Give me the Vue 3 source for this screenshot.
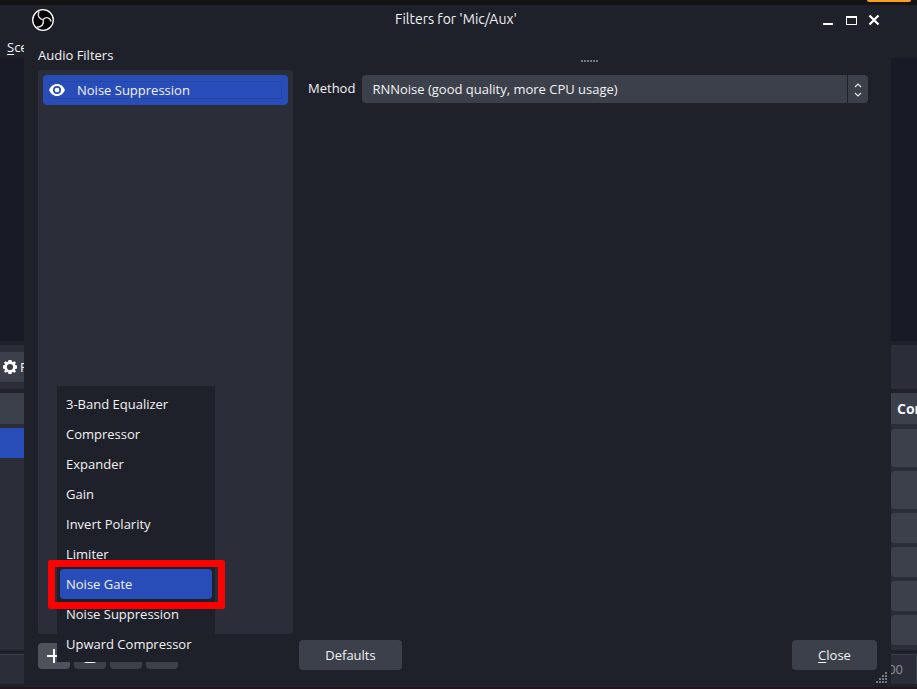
<script setup>
import { ref } from 'vue'

const filterTypes = [
  '3-Band Equalizer',
  'Compressor',
  'Expander',
  'Gain',
  'Invert Polarity',
  'Limiter',
  'Noise Gate',
  'Noise Suppression',
  'Upward Compressor'
]
const highlighted = ref('Noise Gate')
const method = ref('rnnoise')
const controls = ['tall', 'tall', 'short', 'short', 'short', 'short']
const gripDots = [
  [9, 0], [6, 3], [9, 3], [3, 6], [6, 6], [9, 6], [0, 9], [3, 9], [6, 9], [9, 9]
]
</script>

<template>
  <div class="screen">
    <div class="system-bar"><span class="indicator"></span></div>

    <div class="desktop">
      <aside class="strip left">
        <div class="menubar"><a href="#"><u>S</u>cene</a></div>
        <div class="preview"></div>
        <div class="context">
          <button class="props" type="button">
            <svg class="gear" viewBox="0 0 14 14" aria-hidden="true">
              <path fill="#fff" fill-rule="evenodd" d="M5.500 0h3l.5 1.700.9.400L11.500 1.200 12.900 2.600 12 4.200l.4.900 1.600.4v3l-1.600.4-.4.900.9 1.600-1.400 1.400-1.600-.9-.9.400-.5 1.700h-3l-.5-1.700-.9-.4-1.600.9L1.100 11.400 2 9.800l-.4-.9L0 8.500v-3l1.600-.4.400-.9-.9-1.600L2.500 1.200l1.600.9.900-.4zM7 3.900a3.100 3.100 0 1 0 0 6.200 3.100 3.100 0 0 0 0-6.200z" />
            </svg>
            <span>Properties</span>
          </button>
        </div>
        <div class="dock">
          <div class="dock-title"></div>
          <div class="scene-row"></div>
        </div>
        <div class="status"></div>
      </aside>

      <main class="dialog">
        <header class="titlebar">
          <svg class="logo" viewBox="0 0 22 22" aria-hidden="true">
            <circle cx="11" cy="11" r="10.300" fill="#050505" stroke="#fff" stroke-width="1.300" />
            <g fill="none" stroke="#dedede" stroke-width="1.400" stroke-linecap="round">
              <path d="M11.200 10.600C7.300 10.200 5.200 6.800 6.900 3" />
              <path d="M11.200 10.600C13.200 7.600 17.600 7.900 18.900 12" />
              <path d="M11.200 10.600C12.200 14.800 9.800 18.300 5.400 18" />
            </g>
          </svg>
          <h1>Filters for 'Mic/Aux'</h1>
          <div class="window-buttons">
            <button type="button" aria-label="Minimize">
              <svg viewBox="0 0 12 12"><path d="M1 9h10v2H1z" fill="#fff" /></svg>
            </button>
            <button type="button" aria-label="Maximize">
              <svg viewBox="0 0 12 12"><path fill="#fff" fill-rule="evenodd" d="M1 2h11v9H1zM2 4v6h9V4z" /></svg>
            </button>
            <button type="button" aria-label="Close window">
              <svg viewBox="0 0 12 12"><path d="M1.500 1.500l9 9M10.500 1.500l-9 9" stroke="#fff" stroke-width="2.200" /></svg>
            </button>
          </div>
        </header>

        <div class="content">
          <section class="filters">
            <h2>Audio Filters</h2>
            <ul class="filter-list">
              <li class="filter">
                <svg class="eye" viewBox="0 0 16 12" aria-hidden="true">
                  <path fill="#fff" fill-rule="evenodd" d="M8 0C4.500 0 1.500 2.300 0 6c1.500 3.700 4.500 6 8 6s6.500-2.300 8-6c-1.500-3.700-4.500-6-8-6zm0 2a4 4 0 1 1 0 8 4 4 0 0 1 0-8z" />
                  <circle cx="8" cy="6" r="2.300" fill="#fff" />
                </svg>
                <span>Noise Suppression</span>
              </li>
            </ul>
            <div class="tools">
              <button class="tool active" type="button" aria-label="Add filter">
                <svg viewBox="0 0 14 14"><path d="M6 0h2v6h6v2H8v6H6V8H0V6h6z" fill="#fff" /></svg>
              </button>
              <button class="tool" type="button" aria-label="Remove filter">
                <svg viewBox="0 0 14 16"><path d="M1 1h12v2H1zM1 4h12v9q0 2-2 2H3q-2 0-2-2z" fill="#fff" /></svg>
              </button>
              <button class="tool" type="button" aria-label="Move filter up"></button>
              <button class="tool" type="button" aria-label="Move filter down"></button>
            </div>

            <ul class="menu" role="menu">
              <li v-for="name in filterTypes" :key="name" role="none">
                <button
                  type="button"
                  role="menuitem"
                  :class="{ current: name === highlighted }"
                  @mouseenter="highlighted = name"
                >{{ name }}</button>
                <span v-if="name === 'Noise Gate'" class="marker"></span>
              </li>
            </ul>
          </section>

          <section class="settings">
            <div class="splitter"><i v-for="n in 6" :key="n"></i></div>
            <div class="field">
              <label for="method">Method</label>
              <div class="combo">
                <select id="method" v-model="method">
                  <option value="rnnoise">RNNoise (good quality, more CPU usage)</option>
                  <option value="speex">Speex (low CPU usage, low quality)</option>
                </select>
                <svg class="arrows" viewBox="0 0 8 14" aria-hidden="true">
                  <path d="M1 4l3-3 3 3M1 10l3 3 3-3" fill="none" stroke="#e6e6e6" stroke-width="1.200" />
                </svg>
              </div>
            </div>
            <footer class="actions">
              <button class="push defaults" type="button">Defaults</button>
              <button class="push close" type="button"><span><u>C</u>lose</span></button>
            </footer>
          </section>
        </div>

        <svg class="grip" viewBox="0 0 11 11" aria-hidden="true">
          <rect v-for="[x, y] in gripDots" :key="`${x}-${y}`" :x="x" :y="y" width="2" height="2" fill="#777980" />
        </svg>
      </main>

      <aside class="strip right">
        <div class="menubar"></div>
        <div class="preview"></div>
        <div class="context"></div>
        <div class="dock">
          <div class="dock-title">Controls</div>
          <div class="controls">
            <div v-for="(size, i) in controls" :key="i" class="control" :class="size"></div>
          </div>
        </div>
        <div class="status"><span>00:00:00</span></div>
      </aside>
    </div>
  </div>
</template>

<style>
body {
  margin: 0;
  background: #1f212a;
}
</style>

<style scoped>
.screen {
  min-height: 100vh;
  display: flex;
  flex-direction: column;
  box-sizing: border-box;
  border-bottom: 2px solid #27131b;
  background: #1f212a;
  color: #f2f2f4;
  font: 13px/18px "Open Sans", "Noto Sans", sans-serif;
  overflow: hidden;
}
button, select {
  font: inherit;
  color: inherit;
  border: 0;
  margin: 0;
  padding: 0;
}
button { background: none; }
svg { display: block; flex: none; }
ul { list-style: none; margin: 0; padding: 0; }
h1, h2 { margin: 0; font: inherit; }
u { text-underline-offset: 2px; }

.system-bar {
  height: 5px;
  background: #131313;
  display: flex;
  justify-content: flex-end;
}
.indicator {
  width: 44px;
  height: 2px;
  margin-right: 6px;
  background: #f9a11b;
  border-radius: 0 0 8px 8px;
}
.desktop {
  flex: 1;
  display: grid;
  grid-template-columns: 24px minmax(0, 1fr) 26px;
}

.strip {
  display: flex;
  flex-direction: column;
  overflow: hidden;
  white-space: nowrap;
  min-width: 0;
}
.menubar { height: 53px; box-sizing: border-box; padding: 33px 0 0 7px; }
.menubar a { color: inherit; text-decoration: none; }
.preview { flex: 1; background: #181a25; }
.context {
  height: 44px;
  margin: 4px 0;
  background: #2b2d38;
  display: flex;
  align-items: center;
}
.props {
  height: 30px;
  display: flex;
  align-items: center;
  gap: 3px;
  padding: 0 3px 1px;
  background: #3c404b;
}
.gear { width: 14px; height: 14px; }
.dock { height: 257px; background: #2b2d38; }
.dock-title {
  height: 31px;
  font-size: 14px;
  line-height: 31px;
  padding-left: 6px;
  background: #3c404b;
  font-weight: 700;
}
.scene-row { height: 30px; margin-top: 4px; background: #284cb8; }
.controls {
  display: flex;
  flex-direction: column;
  gap: 4px;
  padding-top: 5px;
}
.control { background: #3c404b; border-radius: 4px 0 0 4px; }
.tall { height: 38px; }
.short { height: 30px; }
.status {
  height: 27px;
  padding-bottom: 2px;
  margin: 4px 0 3px;
  background: #2b2d38;
  border-top: 1px solid #3c404b;
  color: #8c8e94;
  display: flex;
  align-items: center;
  justify-content: flex-end;
}
.right .status { border-right: 1px solid #3c404b; padding-right: 13px; }

.dialog {
  position: relative;
  display: flex;
  flex-direction: column;
  min-width: 0;
}
.titlebar {
  height: 30px;
  padding: 0 11px 0 8px;
  display: grid;
  grid-template-columns: 1fr auto 1fr;
  align-items: center;
}
.logo { width: 22px; height: 22px; }
h1 {
  padding-bottom: 2px;
  font: 14px/20px Ubuntu, "Noto Sans", sans-serif;
}
.window-buttons {
  display: flex;
  justify-content: flex-end;
  gap: 11px;
}
.window-buttons svg { width: 12px; height: 12px; }

.content {
  flex: 1;
  display: flex;
  gap: 6px;
  padding: 11px 14px 17px;
}
.filters {
  position: relative;
  width: 255px;
  flex: none;
  display: flex;
  flex-direction: column;
}
h2 { line-height: 18px; margin-bottom: 6px; }
.filter-list {
  flex: 1;
  padding: 5px;
  background: #2b2d38;
  border-radius: 4px;
}
.filter {
  height: 30px;
  display: flex;
  align-items: center;
  gap: 12px;
  padding-left: 6px;
  background: #284cb8;
  border-radius: 4px;
  position: relative;
}
.filter::after {
  content: "";
  position: absolute;
  inset: 6px;
  border: 1px solid #2446a8;
  border-radius: 2px;
}
.eye { width: 16px; height: 12px; z-index: 1; }
.tools { display: flex; gap: 4px; padding: 9px 0 1px; }
.tool {
  width: 32px;
  height: 26px;
  display: grid;
  place-items: center;
  background: #3c404b;
  border-radius: 4px;
}
.tool.active { background: #4e525d; }
.tool svg { width: 14px; }

.menu {
  position: absolute;
  left: 19px;
  bottom: 8px;
  width: 152px;
  padding: 3px;
  background: #1f212a;
}
.menu li { position: relative; }
.menu button {
  display: block;
  width: 100%;
  height: 30px;
  padding-left: 6px;
  text-align: left;
  border-radius: 4px;
}
.menu button.current { background: #284cb8; }
.marker {
  position: absolute;
  inset: -9px -13px -10px -12px;
  border: 7px solid #f00;
  border-radius: 2px;
  z-index: 1;
  pointer-events: none;
}

.settings {
  flex: 1;
  min-width: 0;
  display: flex;
  flex-direction: column;
}
.splitter {
  display: flex;
  justify-content: center;
  gap: 1px;
  padding: 14px 0 13px 2px;
}
.splitter i { width: 2px; height: 2px; background: #777980; }
.field {
  display: flex;
  align-items: center;
  gap: 7px;
  padding: 0 9px;
}
.field label { padding-bottom: 2px; }
.combo {
  flex: 1;
  position: relative;
  display: flex;
}
.combo::after {
  content: "";
  position: absolute;
  right: 20px;
  width: 1px;
  height: 28px;
  background: #1f212a;
}
select {
  appearance: none;
  width: 100%;
  height: 28px;
  padding: 0 30px 0 10px;
  background: #3c404b;
  border-radius: 4px;
}
.arrows {
  position: absolute;
  right: 6px;
  top: 8px;
  width: 8px;
  height: 14px;
  pointer-events: none;
}
.actions {
  display: flex;
  justify-content: space-between;
  margin-top: auto;
}
.push {
  height: 30px;
  background: #3c404b;
  border-radius: 4px;
}
.defaults { width: 103px; }
.close { width: 85px; }
.grip {
  position: absolute;
  right: 4px;
  bottom: 4px;
  width: 11px;
  height: 11px;
}
</style>
